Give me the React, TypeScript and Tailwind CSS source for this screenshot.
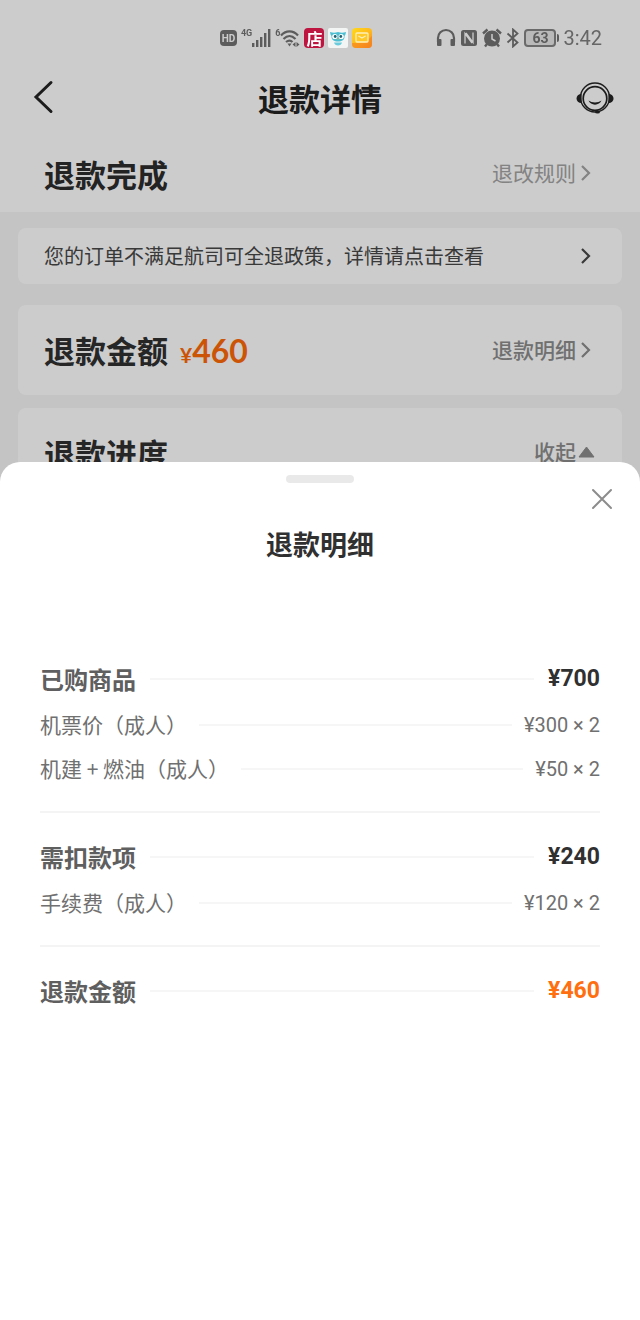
import React from "react";

type Line = { label: string; value: string };

type Section = {
  title: string;
  total: string;
  highlight?: boolean;
  lines: Line[];
};

const sections: Section[] = [
  {
    title: "已购商品",
    total: "¥700",
    lines: [
      { label: "机票价（成人）", value: "¥300 × 2" },
      { label: "机建 + 燃油（成人）", value: "¥50 × 2" },
    ],
  },
  {
    title: "需扣款项",
    total: "¥240",
    lines: [{ label: "手续费（成人）", value: "¥120 × 2" }],
  },
  { title: "退款金额", total: "¥460", highlight: true, lines: [] },
];

function ChevronRight() {
  return (
    <svg viewBox="0 0 20 20" className="size-5 shrink-0" fill="none" stroke="currentColor" strokeWidth="2.2" aria-hidden="true">
      <path d="M6 3 13 10 6 17" />
    </svg>
  );
}

function StatusBar() {
  return (
    <div className="relative z-20 flex h-[76px] items-center justify-end gap-16 pr-[38px] text-[#5c5c5c]">
      <div className="flex items-center gap-1">
        <span className="flex h-4 w-[17px] items-center justify-center rounded-sm bg-[#5c5c5c] font-['Roboto'] text-[10px] font-bold text-[#cccccc]">
          HD
        </span>
        <span className="flex">
          <span className="font-['Roboto'] text-[9px] leading-none font-bold">4G</span>
          <svg viewBox="0 0 19 18" className="h-[18px] w-[19px]" fill="currentColor" aria-hidden="true">
            <rect x="0" y="14" width="2.4" height="4" />
            <rect x="4" y="11" width="2.4" height="7" />
            <rect x="8" y="8" width="2.4" height="10" />
            <rect x="12" y="4" width="2.4" height="14" />
            <rect x="16" y="0" width="2.4" height="18" />
          </svg>
        </span>
        <span className="flex">
          <span className="font-['Roboto'] text-[9px] leading-none font-bold">6</span>
          <svg viewBox="0 0 20 18" className="h-[18px] w-5" fill="none" stroke="currentColor" strokeWidth="2.2" aria-hidden="true">
            <path d="M1 6.5C6 1 13 1 18 6.5M3.5 10C7.5 6 11.5 6 15.5 10M6 13C8.5 11 10.5 11 12.5 13" />
            <path d="M7.5 14.5h4L9.5 17.5z" fill="currentColor" stroke="none" />
            <path d="m15.500 13-3 2.500 3 2.500zM16.500 13l3 2.500-3 2.500z" fill="currentColor" stroke="none" />
          </svg>
        </span>
        <span className="flex size-5 items-center justify-center rounded-sm bg-[#bd1440] text-base leading-none font-bold text-white">
          店
        </span>
        <svg viewBox="0 0 20 20" className="size-5" aria-hidden="true">
          <rect width="20" height="20" rx="2" fill="#f3f5f5" />
          <path d="M2 4c3 1 5 1 8 0 3 1 5 1 8 0-.3 2-.7 3-1.5 4 .3 4-2.5 5.5-6.5 5.5S3.2 12 3.5 8C2.7 7 2.3 6 2 4Z" fill="#4dbfd3" />
          <circle cx="6.800" cy="8.500" r="2.600" fill="#fff" />
          <circle cx="13.200" cy="8.500" r="2.600" fill="#fff" />
          <circle cx="7.200" cy="8.500" r="1.400" fill="#245c68" />
          <circle cx="12.800" cy="8.500" r="1.400" fill="#245c68" />
          <path d="m9 10.500 1 1.500 1-1.500z" fill="#f2a13a" />
          <path d="M6 14.500h8c-.5 2-2 3-4 3s-3.500-1-4-3Z" fill="#6acbdc" />
        </svg>
        <svg viewBox="0 0 20 20" className="size-5" aria-hidden="true">
          <defs>
            <linearGradient id="mail" x1="0" y1="0" x2="1" y2="1">
              <stop offset="0" stopColor="#ffd91a" />
              <stop offset=".55" stopColor="#ffb81c" />
              <stop offset="1" stopColor="#f47a1c" />
            </linearGradient>
          </defs>
          <rect width="20" height="20" rx="4" fill="url(#mail)" />
          <path d="M0 15h13l7-7v8a4 4 0 0 1-4 4H4a4 4 0 0 1-4-4z" fill="#f5861f" opacity=".7" />
          <rect x="4" y="5" width="12" height="9" rx="1" fill="#ffc928" stroke="#fff0b8" strokeWidth="1.300" />
          <path d="m6.500 8 3.500 2 3.500-2" fill="none" stroke="#fff0b8" strokeWidth="1.300" />
        </svg>
      </div>
      <div className="flex items-center gap-1">
        <svg viewBox="0 0 20 20" className="size-5" fill="none" stroke="currentColor" strokeWidth="2.200" aria-hidden="true">
          <path d="M2 14v-4a8 8 0 0 1 16 0v4" />
          <rect x="1" y="11" width="4.500" height="7" rx="1" fill="currentColor" stroke="none" />
          <rect x="14.500" y="11" width="4.500" height="7" rx="1" fill="currentColor" stroke="none" />
        </svg>
        <svg viewBox="0 0 18 18" className="size-[18px]" fill="none" aria-hidden="true">
          <rect x="1" y="1" width="16" height="16" rx="2.500" fill="currentColor" />
          <path d="M5 14.500V4.500l7 9.500M13 3.500v10L6 4" stroke="#cccccc" strokeWidth="1.300" />
        </svg>
        <svg viewBox="0 0 20 20" className="size-5" fill="none" stroke="currentColor" strokeWidth="2" aria-hidden="true">
          <circle cx="10" cy="10.500" r="7" fill="currentColor" />
          <path d="M1 5.500 5.500 1.500M19 5.500 14.500 1.500M5 16l-2 2.500M15 16l2 2.500" strokeWidth="2.400" />
          <path d="M10 6v5l3.500 2" stroke="#cccccc" strokeWidth="1.500" />
        </svg>
        <svg viewBox="0 0 14 20" className="h-5 w-[14px]" fill="none" stroke="currentColor" strokeWidth="1.800" aria-hidden="true">
          <path d="m1.500 5.500 10 9L7 18.500v-17l4.500 4-10 9" />
        </svg>
        <span className="flex items-center gap-px">
          <span className="flex h-[18px] w-8 items-center justify-center rounded border-2 border-[#6a6a6a] bg-[#b9b9b9] font-['Roboto'] text-sm leading-none font-bold">
            63
          </span>
          <span className="h-2 w-0.5 rounded-r-sm bg-[#5c5c5c]" />
        </span>
        <time className="font-['Roboto'] text-xl leading-none text-[#666666]">3:42</time>
      </div>
    </div>
  );
}

function Header() {
  return (
    <header className="grid h-[42px] grid-cols-[auto_1fr_auto] items-center px-[26px] text-[#242424]">
      <button type="button" aria-label="返回" className="flex w-[38px] pl-1.5">
        <svg viewBox="0 0 22 34" className="h-[34px] w-[22px]" fill="none" stroke="currentColor" strokeWidth="3" strokeLinecap="round" aria-hidden="true">
          <path d="M19 2.5 4 17l15 14.500" />
        </svg>
      </button>
      <h1 className="text-center text-[31px] leading-none font-bold">退款详情</h1>
      <button type="button" aria-label="联系客服">
        <svg viewBox="0 0 38 34" className="h-[34px] w-[38px]" fill="none" stroke="currentColor" aria-hidden="true">
          <circle cx="19" cy="17.500" r="14.500" strokeWidth="1.400" />
          <circle cx="19" cy="18.500" r="11.800" strokeWidth="1.700" />
          <path d="M5.500 14v9C2.500 23 .5 21 .5 18.500s2-4.500 5-4.500ZM32.500 14v9c3 0 5-2 5-4.500s-2-4.500-5-4.500Z" fill="currentColor" stroke="none" />
          <path d="M12.500 20.500c2 5.500 11 5.500 13 0-3.500 2.600-9.500 2.600-13 0Z" fill="currentColor" stroke="none" />
          <ellipse cx="21.500" cy="32" rx="2.500" ry="1.600" fill="currentColor" stroke="none" />
        </svg>
      </button>
    </header>
  );
}

function DetailRow({ label, value }: Line) {
  return (
    <div className="flex h-11 items-center gap-3 text-[#707070]">
      <dt className="text-[21px]">{label}</dt>
      <span className="h-0.5 flex-1 bg-[#f6f6f6]" />
      <dd className="font-['Roboto'] text-xl">{value}</dd>
    </div>
  );
}

function DetailSection({ section }: { section: Section }) {
  return (
    <dl className="border-b-2 border-[#f4f4f4] pb-5 not-first:pt-5 last:border-b-0">
      <div className="flex h-12 items-center gap-[14px] font-bold">
        <dt className="text-2xl text-[#5f5f5f]">{section.title}</dt>
        <span className="h-0.5 flex-1 bg-[#f6f6f6]" />
        <dd
          className={
            section.highlight
              ? "font-['Roboto'] text-[23px] text-[#ff6f0f]"
              : "font-['Roboto'] text-[23px] text-[#303030]"
          }
        >
          {section.total}
        </dd>
      </div>
      {section.lines.map((line) => (
        <DetailRow key={line.label} label={line.label} value={line.value} />
      ))}
    </dl>
  );
}

function RefundSheet() {
  return (
    <section
      role="dialog"
      aria-labelledby="sheet-title"
      className="fixed inset-x-0 bottom-0 z-30 h-[65vh] rounded-t-[20px] bg-white"
    >
      <div className="mx-auto mt-[13px] h-2 w-[68px] rounded bg-[#e9e9e9]" />
      <div className="flex h-8 items-center justify-end px-[26px]">
        <button type="button" aria-label="关闭" className="text-[#8c8c8c]">
          <svg viewBox="0 0 24 24" className="size-6" fill="none" stroke="currentColor" strokeWidth="2" strokeLinecap="round" aria-hidden="true">
            <path d="m3 3 18 18M21 3 3 21" />
          </svg>
        </button>
      </div>
      <h2 id="sheet-title" className="mt-[11px] text-center text-[27px] leading-9 font-bold text-[#303030]">
        退款明细
      </h2>
      <div className="mt-[93px] px-10">
        {sections.map((section) => (
          <DetailSection key={section.title} section={section} />
        ))}
      </div>
    </section>
  );
}

export default function App() {
  return (
    <div className="h-screen overflow-hidden bg-[#f6f6f6] font-['Noto_Sans_CJK_SC',sans-serif]">
      <div className="fixed inset-0 z-10 bg-black/20" />

      <div className="bg-white">
        <StatusBar />
        <Header />
        <div className="mt-4 flex h-[78px] items-center justify-between px-11">
          <h2 className="text-[31px] leading-none font-bold text-[#2c2c2c]">退款完成</h2>
          <button type="button" className="flex items-center text-[21px] text-[#a4a4a4]">
            退改规则
            <ChevronRight />
          </button>
        </div>
      </div>

      <main className="flex flex-col px-[18px] pt-4">
        <button
          type="button"
          className="flex h-14 items-center justify-between rounded-lg bg-white px-[26px] text-xl text-[#484848]"
        >
          您的订单不满足航司可全退政策，详情请点击查看
          <ChevronRight />
        </button>

        <section className="mt-[21px] flex h-[90px] items-center justify-between rounded-lg bg-white px-[26px]">
          <div className="flex items-baseline gap-3">
            <h2 className="text-[31px] leading-none font-bold text-[#303030]">退款金额</h2>
            <p className="font-['Lato'] text-[32px] leading-none font-bold text-[#ff6a08]">
              <span className="text-[21px]">¥</span>460
            </p>
          </div>
          <button type="button" className="flex items-center text-[21px] font-medium text-[#8c8c8c]">
            退款明细
            <ChevronRight />
          </button>
        </section>

        <section className="mt-[13px] flex h-[88px] items-center justify-between rounded-lg bg-white px-[26px]">
          <h2 className="text-[31px] leading-none font-bold text-[#303030]">退款进度</h2>
          <button type="button" className="flex items-center text-[21px] font-medium text-[#8c8c8c]">
            收起
            <svg viewBox="0 0 20 20" className="size-5" fill="currentColor" aria-hidden="true">
              <path d="M10.5 5 18 15H3z" stroke="currentColor" strokeLinejoin="round" />
            </svg>
          </button>
        </section>
      </main>

      <RefundSheet />
    </div>
  );
}
